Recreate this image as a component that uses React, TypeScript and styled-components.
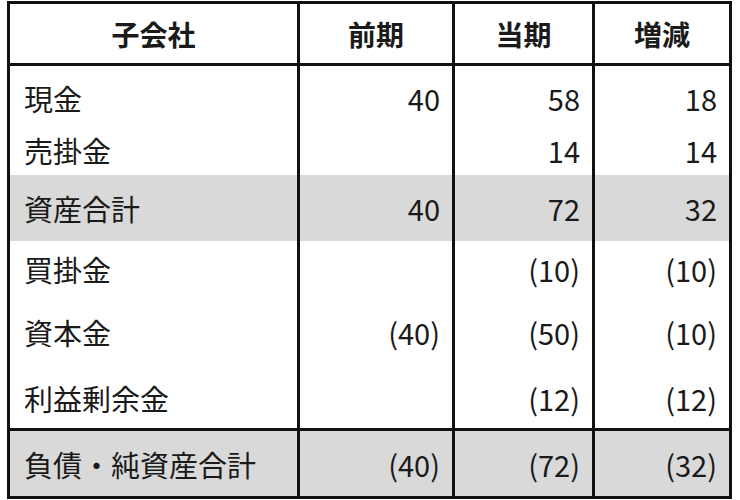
import { createGlobalStyle, styled } from "styled-components";

const GlobalStyle = createGlobalStyle`
  html, body {
    margin: 0;
    padding: 0;
    background: #fff;
  }
  body {
    font-family: "Noto Sans CJK JP", "Noto Sans", sans-serif;
    color: #1a1a1a;
  }
`;

const Page = styled.div`
  padding: 1px 0 0 7px;
`;

const Sheet = styled.table`
  border-collapse: separate;
  border-spacing: 0;
  table-layout: fixed;
  width: 725px;
  border: 3px solid #111;
  font-size: 29px;
`;

const HeadCell = styled.th<{ $w: number; $last?: boolean }>`
  box-sizing: border-box;
  width: ${(p) => p.$w}px;
  height: 62px;
  padding: 0;
  font-size: 28px;
  font-weight: 700;
  text-align: center;
  border-bottom: 3px solid #111;
  border-right: ${(p) => (p.$last ? "none" : "3px solid #111")};
`;

const Row = styled.tr<{ $total?: boolean }>`
  background: ${(p) => (p.$total ? "#d9d9d9" : "#fff")};
`;

const Cell = styled.td<{ $h: number; $shift?: number; $label?: boolean; $last?: boolean; $ruled?: boolean }>`
  box-sizing: border-box;
  height: ${(p) => p.$h}px;
  padding: ${(p) => (p.$shift && p.$shift > 0 ? p.$shift : 0)}px ${(p) => (p.$label ? 0 : 12)}px
    ${(p) => (p.$shift && p.$shift < 0 ? -p.$shift : 0)}px ${(p) => (p.$label ? 14 : 0)}px;
  text-align: ${(p) => (p.$label ? "left" : "right")};
  vertical-align: middle;
  white-space: nowrap;
  font-weight: 400;
  border-right: ${(p) => (p.$last ? "none" : "3px solid #111")};
  border-top: ${(p) => (p.$ruled ? "3px solid #111" : "none")};
`;

type Line = {
  label: string;
  values: [string, string, string];
  h: number;
  shift?: number;
  total?: boolean;
  ruled?: boolean;
};

const lines: Line[] = [
  { label: "現金", values: ["40", "58", "18"], h: 58, shift: 6 },
  { label: "売掛金", values: ["", "14", "14"], h: 51 },
  { label: "資産合計", values: ["40", "72", "32"], h: 66, total: true },
  { label: "買掛金", values: ["", "(10)", "(10)"], h: 55 },
  { label: "資本金", values: ["(40)", "(50)", "(10)"], h: 72 },
  { label: "利益剰余金", values: ["", "(12)", "(12)"], h: 60 },
  { label: "負債・純資産合計", values: ["(40)", "(72)", "(32)"], h: 68, total: true, ruled: true },
];

export default function App() {
  return (
    <Page>
      <GlobalStyle />
      <Sheet>
        <thead>
          <tr>
            <HeadCell $w={290}>子会社</HeadCell>
            <HeadCell $w={155}>前期</HeadCell>
            <HeadCell $w={140}>当期</HeadCell>
            <HeadCell $w={134} $last>
              増減
            </HeadCell>
          </tr>
        </thead>
        <tbody>
          {lines.map((line) => (
            <Row key={line.label} $total={line.total}>
              <Cell $h={line.h} $shift={line.shift} $ruled={line.ruled} $label>
                {line.label}
              </Cell>
              {line.values.map((v, i) => (
                <Cell key={i} $h={line.h} $shift={line.shift} $ruled={line.ruled} $last={i === 2}>
                  {v}
                </Cell>
              ))}
            </Row>
          ))}
        </tbody>
      </Sheet>
    </Page>
  );
}
